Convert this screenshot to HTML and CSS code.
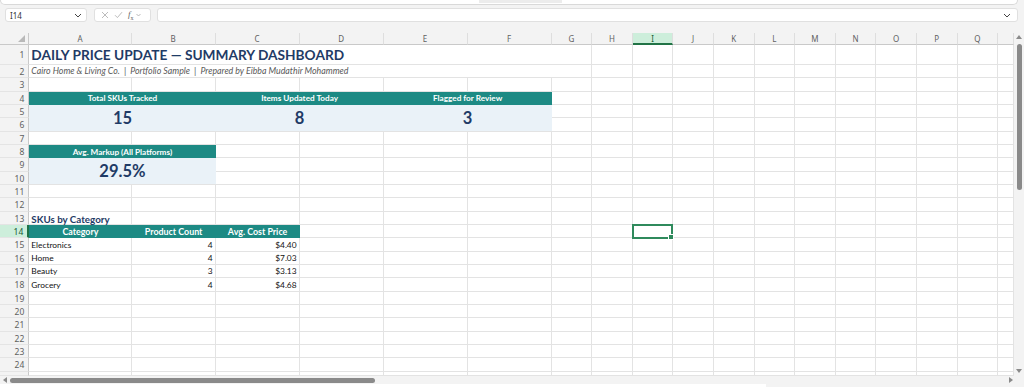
FILE: index.html
```html
<!DOCTYPE html>
<html lang="en">
  <head>
    <meta charset="UTF-8" />
    <meta name="viewport" content="width=device-width, initial-scale=1.0" />
    <title>Daily Price Update</title>
    <link rel="stylesheet" href="styles.css">
  </head>
  <body>
    <div id="tabStrip"><div class="tab-ghost"></div></div>
    <div id="formulaBar">
      <div class="name-box">
        <span>I14</span>
        <svg width="8" height="5" viewBox="0 0 8 5"><path d="M1 1 L4 4 L7 1" fill="none" stroke="#444" stroke-width="1"/></svg>
      </div>
      <div class="fx-box">
        <svg width="8" height="8" viewBox="0 0 8 8"><path d="M1 1 L7 7 M7 1 L1 7" stroke="#b4b4b4" stroke-width="0.9"/></svg>
        <svg width="9" height="8" viewBox="0 0 9 8"><path d="M1 4.2 L3.4 6.6 L8 1.2" fill="none" stroke="#b4b4b4" stroke-width="0.9"/></svg>
        <span class="fx">f<sub>x</sub></span>
        <svg width="5" height="4" viewBox="0 0 5 4"><path d="M0.5 1 L2.5 3 L4.5 1" fill="none" stroke="#aaa" stroke-width="0.8"/></svg>
      </div>
      <div class="formula-input">
        <svg width="8" height="5" viewBox="0 0 8 5"><path d="M1 1 L4 4 L7 1" fill="none" stroke="#444" stroke-width="1"/></svg>
      </div>
    </div>
    <div id="workArea">
      <div id="sheet">
        <div id="gridLines" class="sheet-grid"></div>
        <div id="gridContent" class="sheet-grid">
          <div class="selection"></div>
        </div>
      </div>
      <div id="vScroll">
        <svg width="6" height="4" viewBox="0 0 6 4"><path d="M0 4 L3 0 L6 4 Z" fill="#8a8a8a"/></svg>
        <div class="v-thumb"></div>
        <div class="v-space"></div>
        <svg width="6" height="4" viewBox="0 0 6 4"><path d="M0 0 L3 4 L6 0 Z" fill="#8a8a8a"/></svg>
      </div>
    </div>
    <div id="hScroll">
      <svg width="4" height="6" viewBox="0 0 4 6"><path d="M4 0 L0 3 L4 6 Z" fill="#8a8a8a"/></svg>
      <div class="h-thumb"></div>
      <div class="h-space"></div>
      <svg width="4" height="6" viewBox="0 0 4 6"><path d="M0 0 L4 3 L0 6 Z" fill="#8a8a8a"/></svg>
    </div>
    <div id="sheetTabs"><div class="tab-area"></div></div>
    <script>
      const gridLines = document.getElementById("gridLines");
      const gridContent = document.getElementById("gridContent");
      // last column only peeks in at the edge, so it gets no letter
      const letters = "ABCDEFGHIJKLMNOPQ".split("").concat([""]);
      const rowCount = 25;

      const cells = [
        { row: 1, col: 1, colSpan: 6, cls: "title", text: "DAILY PRICE UPDATE — SUMMARY DASHBOARD" },
        { row: 2, col: 1, colSpan: 6, cls: "subtitle", text: "Cairo Home & Living Co.  |  Portfolio Sample  |  Prepared by Eibba Mudathir Mohammed" },
        { row: 4, col: 1, colSpan: 2, cls: "kpi-label", text: "Total SKUs Tracked" },
        { row: 4, col: 3, colSpan: 2, cls: "kpi-label", text: "Items Updated Today" },
        { row: 4, col: 5, colSpan: 2, cls: "kpi-label", text: "Flagged for Review" },
        { row: 5, col: 1, colSpan: 2, rowSpan: 2, cls: "kpi-value", text: "15" },
        { row: 5, col: 3, colSpan: 2, rowSpan: 2, cls: "kpi-value", text: "8" },
        { row: 5, col: 5, colSpan: 2, rowSpan: 2, cls: "kpi-value", text: "3" },
        { row: 8, col: 1, colSpan: 2, cls: "kpi-label", text: "Avg. Markup (All Platforms)" },
        { row: 9, col: 1, colSpan: 2, rowSpan: 2, cls: "kpi-value", text: "29.5%" },
        { row: 13, col: 1, cls: "section", text: "SKUs by Category" },
        { row: 14, col: 1, cls: "th", text: "Category" },
        { row: 14, col: 2, cls: "th", text: "Product Count" },
        { row: 14, col: 3, cls: "th", text: "Avg. Cost Price" }
      ];

      const categories = [
        ["Electronics", 4, "$4.40"],
        ["Home", 4, "$7.03"],
        ["Beauty", 3, "$3.13"],
        ["Grocery", 4, "$4.68"]
      ];
      categories.forEach((item, i) => {
        cells.push({ row: 15 + i, col: 1, cls: "td", text: item[0] });
        cells.push({ row: 15 + i, col: 2, cls: "td num", text: item[1] });
        cells.push({ row: 15 + i, col: 3, cls: "td num", text: item[2] });
      });

      function addDiv(parent, className, text) {
        const div = document.createElement("div");
        div.className = className;
        if (text !== undefined) div.textContent = text;
        parent.appendChild(div);
        return div;
      }

      // corner + column headers
      addDiv(gridLines, "corner").innerHTML =
        '<svg width="7" height="7" viewBox="0 0 7 7"><path d="M7 0 L7 7 L0 7 Z" fill="#b9b9b9"/></svg>';
      letters.forEach((letter, i) => {
        addDiv(gridLines, i === 8 ? "col-head active" : "col-head", letter);
      });

      // row headers + empty cells
      for (let r = 1; r <= rowCount; r++) {
        addDiv(gridLines, r === 14 ? "row-head active" : "row-head", r);
        letters.forEach(() => addDiv(gridLines, "cell"));
      }

      // cell values sit on their own layer with the same tracks
      cells.forEach((c) => {
        const div = addDiv(gridContent, "content " + c.cls, c.text);
        div.style.gridRow = `${c.row + 1} / span ${c.rowSpan || 1}`;
        div.style.gridColumn = `${c.col + 1} / span ${c.colSpan || 1}`;
      });
    </script>
  </body>
</html>
```

FILE: styles.css
```css
* {
  box-sizing: border-box;
}
body {
  margin: 0;
  width: 1024px;
  height: 387px;
  overflow: hidden;
  display: flex;
  flex-direction: column;
  background-color: #f3f3f3;
  font-family: "Noto Sans", Arial, sans-serif;
}
#tabStrip {
  height: 5px;
  margin-right: 6px;
  padding-left: 478px;
  background: #fff;
  border: 1px solid #d9d9d9;
  border-top: none;
  border-radius: 0 0 5px 5px;
}
.tab-ghost {
  width: 83px;
  height: 3px;
  background: #ececec;
}
#formulaBar {
  display: flex;
  height: 14px;
  margin: 3px 6px 11px 5px;
}
.name-box {
  width: 82px;
  display: flex;
  align-items: center;
  justify-content: space-between;
  padding: 0 4px 0 4px;
  background: #fff;
  border: 1px solid #e0e0e0;
  border-radius: 3px;
  font-size: 8px;
  color: #333;
}
.fx-box {
  width: 57px;
  margin-left: 7px;
  display: flex;
  align-items: center;
  gap: 5px;
  padding-left: 6px;
  background: #fff;
  border: 1px solid #e0e0e0;
  border-radius: 3px;
}
.fx {
  font-family: "Liberation Serif", serif;
  font-style: italic;
  font-size: 9px;
  color: #666;
  margin-right: -3px;
}
.fx sub {
  font-size: 6px;
  font-style: normal;
}
.formula-input {
  flex: 1;
  margin-left: 6px;
  display: flex;
  align-items: center;
  justify-content: flex-end;
  padding-right: 6px;
  background: #fff;
  border: 1px solid #e0e0e0;
  border-radius: 3px;
}
#workArea {
  height: 343px;
  display: flex;
}
#sheet {
  flex: 1;
  display: grid;
  overflow: hidden;
  background: #fff;
  font-family: Lato, "Liberation Sans", sans-serif;
}
.sheet-grid {
  grid-area: 1 / 1;
  display: grid;
  grid-template-columns: 29.3px 102.3px repeat(5, 84px) repeat(11, 40.6px) 1fr;
  grid-template-rows: 12px 20px repeat(23, 13.333px) 1fr;
  min-height: 0;
}
.corner {
  display: flex;
  align-items: flex-end;
  justify-content: flex-end;
  padding: 0 3px 2px 0;
  background: #f3f3f3;
  border-right: 1px solid #c9c9c9;
  border-bottom: 1px solid #c9c9c9;
}
.col-head {
  display: flex;
  align-items: center;
  justify-content: center;
  background: #f3f3f3;
  border-right: 1px solid #dedede;
  border-bottom: 1px solid #c9c9c9;
  font-family: "Noto Sans", sans-serif;
  font-size: 8px;
  color: #616161;
}
.col-head.active {
  background: #cdeedb;
  border-bottom: 2px solid #217346;
  color: #185c37;
}
.row-head {
  display: flex;
  align-items: flex-start;
  justify-content: flex-end;
  padding: 1px 4px 0 0;
  overflow: hidden;
  line-height: 11px;
  background: #f3f3f3;
  border-right: 1px solid #c9c9c9;
  border-bottom: 1px solid #e4e4e4;
  font-family: "Noto Sans", sans-serif;
  font-size: 8.5px;
  color: #616161;
}
.row-head:nth-child(20) {
  align-items: center;
  padding-top: 0;
}
.row-head.active {
  background: #cdeedb;
  border-right: 2px solid #217346;
  color: #185c37;
}
.cell {
  border-right: 1px solid #e3e3e3;
  border-bottom: 1px solid #e3e3e3;
}
.content {
  display: flex;
  align-items: flex-end;
  white-space: pre;
  overflow: visible;
  padding: 0 2px 1px 2px;
}
.title {
  align-items: center;
  background: #fff;
  border-bottom: 1px solid #e3e3e3;
  font-size: 13.7px;
  font-weight: 700;
  color: #1f3b66;
}
.subtitle {
  background: #fff;
  border-bottom: 1px solid #e3e3e3;
  font-size: 8.8px;
  font-style: italic;
  color: #595959;
}
.kpi-label {
  align-items: center;
  justify-content: center;
  padding: 0;
  background: #1d8a84;
  font-size: 8.2px;
  font-weight: 700;
  color: #fff;
}
.kpi-value {
  align-items: center;
  justify-content: center;
  padding: 0;
  background: #eaf2f8;
  border-bottom: 1px solid #e3e3e3;
  font-size: 16.5px;
  font-weight: 700;
  color: #1f3b66;
}
.section {
  font-size: 9.8px;
  font-weight: 700;
  color: #1f3b66;
  padding-bottom: 0;
}
.th {
  align-items: center;
  justify-content: center;
  padding: 0;
  background: #1d8a84;
  font-size: 8.9px;
  font-weight: 700;
  color: #fff;
}
.td {
  font-size: 8.4px;
  color: #111;
  padding-bottom: 2px;
}
.td.num {
  justify-content: flex-end;
  padding-right: 3px;
}
.selection {
  grid-row: 15;
  grid-column: 10;
  margin: -1px 0 -1px -1px;
  border: 2px solid #2f8a5c;
  position: relative;
}
.selection::after {
  content: "";
  position: absolute;
  right: -3px;
  bottom: -3px;
  width: 4px;
  height: 4px;
  background: #2f8a5c;
  border: 1px solid #fff;
}
#vScroll {
  width: 10px;
  display: flex;
  flex-direction: column;
  align-items: center;
  padding: 2px 0 3px;
  background: #f3f3f3;
}
.v-thumb {
  width: 5px;
  height: 146px;
  margin-top: 5px;
  border-radius: 3px;
  background: #8a8a8a;
}
.v-space {
  flex: 1;
}
#hScroll {
  height: 8px;
  display: flex;
  align-items: center;
  padding: 0 11px 0 3px;
  background: #f3f3f3;
}
.h-thumb {
  width: 365px;
  height: 5px;
  margin-left: 3px;
  border-radius: 3px;
  background: #8a8a8a;
}
.h-space {
  flex: 1;
}
#sheetTabs {
  height: 3px;
  background: #f3f3f3;
}
.tab-area {
  width: 766px;
  height: 3px;
  background: #fff;
}
```
